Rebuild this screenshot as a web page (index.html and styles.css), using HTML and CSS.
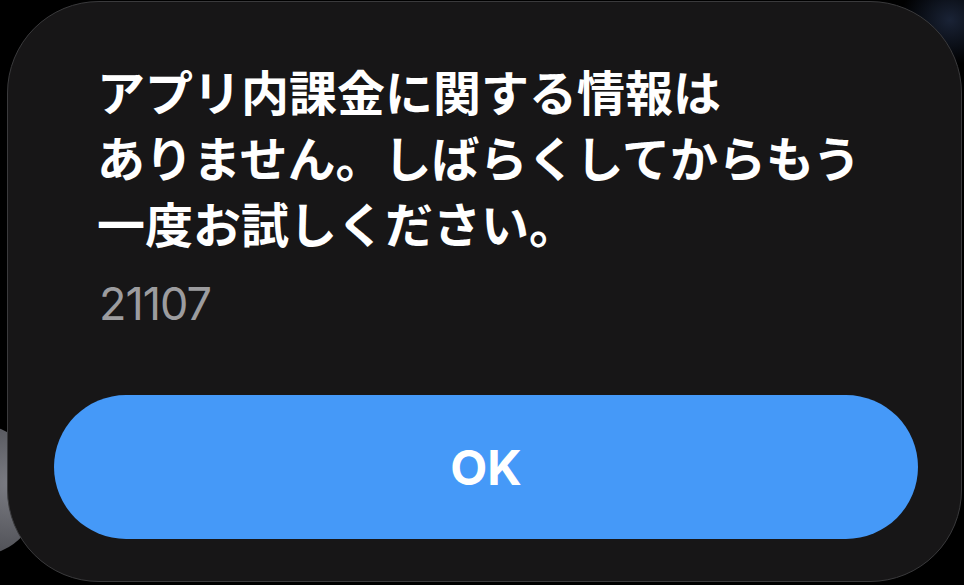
FILE: index.html
```html
<!DOCTYPE html>
<html lang="ja">
<head>
<meta charset="utf-8">
<title>Dialog</title>
<link rel="stylesheet" href="styles.css">
</head>
<body>
<div class="backdrop">
  <div class="bg-photo"></div>
  <div class="dialog">
    <p class="message">アプリ内課金に関する情報は<br>ありません。しばらくしてからもう<br>一度お試しください。</p>
    <p class="code">21107</p>
    <button class="ok">OK</button>
  </div>
</div>
</body>
</html>
```

FILE: styles.css
```css
html, body {
  margin: 0;
  padding: 0;
  background: #000;
}
.backdrop {
  position: relative;
  width: 964px;
  height: 585px;
  overflow: hidden;
  background:
    radial-gradient(ellipse 50px 45px at 950px 20px, #1a2336 0%, rgba(20,28,44,0.5) 60%, rgba(0,0,0,0) 100%),
    #000;
  padding: 1px 0 0 7px;
  box-sizing: border-box;
}
.bg-photo {
  position: absolute;
  left: -80px;
  top: 425px;
  width: 120px;
  height: 130px;
  border-radius: 50%;
  background: radial-gradient(circle at 75% 45%, #7b7c83 0%, #55565c 55%, #2a2a2e 100%);
}
.dialog {
  position: relative;
  box-sizing: border-box;
  width: 955px;
  height: 581px;
  border: 1.5px solid #3a3a3c;
  border-radius: 92px;
  background: #171617;
  display: flex;
  flex-direction: column;
  padding: 55px 44px 42px 46px;
}
.message {
  margin: 0 0 0 43px;
  font-family: "Noto Sans CJK JP", "Noto Sans", sans-serif;
  font-weight: 700;
  font-size: 48px;
  line-height: 66px;
  color: #ffffff;
  white-space: nowrap;
}
.code {
  margin: 24px 0 0 45px;
  font-family: Inter, "Liberation Sans", sans-serif;
  font-weight: 400;
  font-size: 45px;
  line-height: 50px;
  letter-spacing: -1px;
  color: #9c9c9f;
}
.ok {
  margin-top: auto;
  width: 864px;
  height: 144px;
  border: none;
  border-radius: 72px;
  background: #4599f8;
  color: #fff;
  font-family: Inter, "Liberation Sans", sans-serif;
  font-weight: 700;
  font-size: 48px;
  padding: 0;
}
```
